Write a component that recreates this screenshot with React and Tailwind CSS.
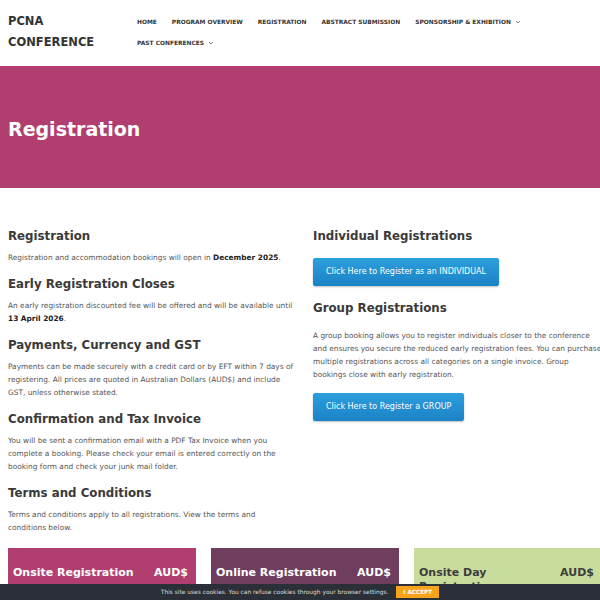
import React from "react";

const navTop = ["HOME", "PROGRAM OVERVIEW", "REGISTRATION", "ABSTRACT SUBMISSION"];

const Chevron = () => (
  <svg width="6" height="4" viewBox="0 0 6 4" className="ml-1 inline-block" fill="none">
    <path d="M1 1l2 2 2-2" stroke="#666" strokeWidth="0.8" />
  </svg>
);

const Section = ({ title, children, pClass = "" }) => (
  <div className="mb-[11.5px]">
    <h2 className="text-[11.8px] font-bold text-[#3a3a3a] leading-[18px] mb-[5.5px]">{title}</h2>
    <p className={`text-[7.4px] leading-[13px] text-[#555] ${pClass}`}>{children}</p>
  </div>
);

const BlueButton = ({ children }) => (
  <button className="h-[28px] px-[13px] rounded-[2px] text-white text-[8px] bg-gradient-to-b from-[#2d9fdd] to-[#1a82c6] shadow-[0_1px_2px_rgba(0,0,0,0.25)]">
    {children}
  </button>
);

const PriceCard = ({ title, bg, text = "text-white" }) => (
  <div className={`${bg} h-[60px] pt-[18px] pl-[5px] pr-[8px] flex justify-between items-start gap-2`}>
    <span className={`${text} text-[11px] font-bold leading-[13.5px]`}>{title}</span>
    <span className={`${text} text-[11px] font-bold leading-[13.5px]`}>AUD$</span>
  </div>
);

export default function App() {
  return (
    <div className="w-[600px] h-[600px] overflow-hidden relative bg-white" style={{ fontFamily: "'DejaVu Sans', sans-serif" }}>
      <div className="w-[610px]">
        {/* HEADER */}
        <header className="h-[66px] px-2 flex">
          <div className="w-[129px] pt-[11px] text-[11.5px] font-bold leading-[21px] text-[#333]">
            PCNA
            <br />
            CONFERENCE
          </div>
          <nav className="pt-[12px] text-[5.9px] font-bold text-[#333] leading-[21px]">
            <div className="flex gap-[15px]">
              {navTop.map((n) => (
                <span key={n}>{n}</span>
              ))}
              <span>
                SPONSORSHIP &amp; EXHIBITION
                <Chevron />
              </span>
            </div>
            <div>
              PAST CONFERENCES
              <Chevron />
            </div>
          </nav>
        </header>

        {/* HERO */}
        <div className="h-[122px] bg-[#b03f6f] px-2 pt-[5px] flex items-center">
          <h1 className="text-[19px] font-bold text-white">Registration</h1>
        </div>

        {/* CONTENT */}
        <main className="px-2 pt-[39px]">
          <div className="grid grid-cols-2 gap-4">
            <div>
              <Section title="Registration">
                Registration and accommodation bookings will open in <b className="text-[#222]">December 2025</b>.
              </Section>
              <Section title="Early Registration Closes">
                An early registration discounted fee will be offered and will be available until{" "}
                <b className="text-[#222]">13 April 2026</b>.
              </Section>
              <Section title="Payments, Currency and GST">
                Payments can be made securely with a credit card or by EFT within 7 days of registering. All prices are
                quoted in Australian Dollars (AUD$) and include GST, unless otherwise stated.
              </Section>
              <Section title="Confirmation and Tax Invoice">
                You will be sent a confirmation email with a PDF Tax Invoice when you complete a booking. Please check your
                email is entered correctly on the booking form and check your junk mail folder.
              </Section>
              <Section title="Terms and Conditions" pClass="max-w-[265px]">
                Terms and conditions apply to all registrations. View the terms and conditions below.
              </Section>
            </div>
            <div>
              <h2 className="text-[11.8px] font-bold text-[#3a3a3a] leading-[18px] mb-[12px]">Individual Registrations</h2>
              <BlueButton>Click Here to Register as an INDIVIDUAL</BlueButton>
              <h2 className="text-[11.8px] font-bold text-[#3a3a3a] leading-[18px] mt-[13px] mb-[12px]">Group Registrations</h2>
              <p className="text-[7.4px] leading-[13px] text-[#555] mb-[11px]">
                A group booking allows you to register individuals closer to the conference and ensures you secure the
                reduced early registration fees. You can purchase multiple registrations across all categories on a single
                invoice. Group bookings close with early registration.
              </p>
              <BlueButton>Click Here to Register a GROUP</BlueButton>
            </div>
          </div>

          <div className="grid grid-cols-3 gap-[15px] mt-[3px]">
            <PriceCard title="Onsite Registration" bg="bg-[#b03f6f]" />
            <PriceCard title="Online Registration" bg="bg-[#6f3d5e]" />
            <PriceCard title="Onsite Day Registration" bg="bg-[#c8dc9b]" text="text-[#3d3d3d]" />
          </div>
        </main>
      </div>

      {/* COOKIE BAR */}
      <div className="absolute bottom-0 left-0 w-full h-[16px] bg-[#2b3038] flex items-center justify-center gap-[8px]">
        <span className="text-[5.9px] text-[#ddd]">
          This site uses cookies. You can refuse cookies through your browser settings.
        </span>
        <span className="bg-[#f5a31a] text-white text-[5.7px] font-bold px-[7px] py-[2px]">I ACCEPT</span>
      </div>
    </div>
  );
}
